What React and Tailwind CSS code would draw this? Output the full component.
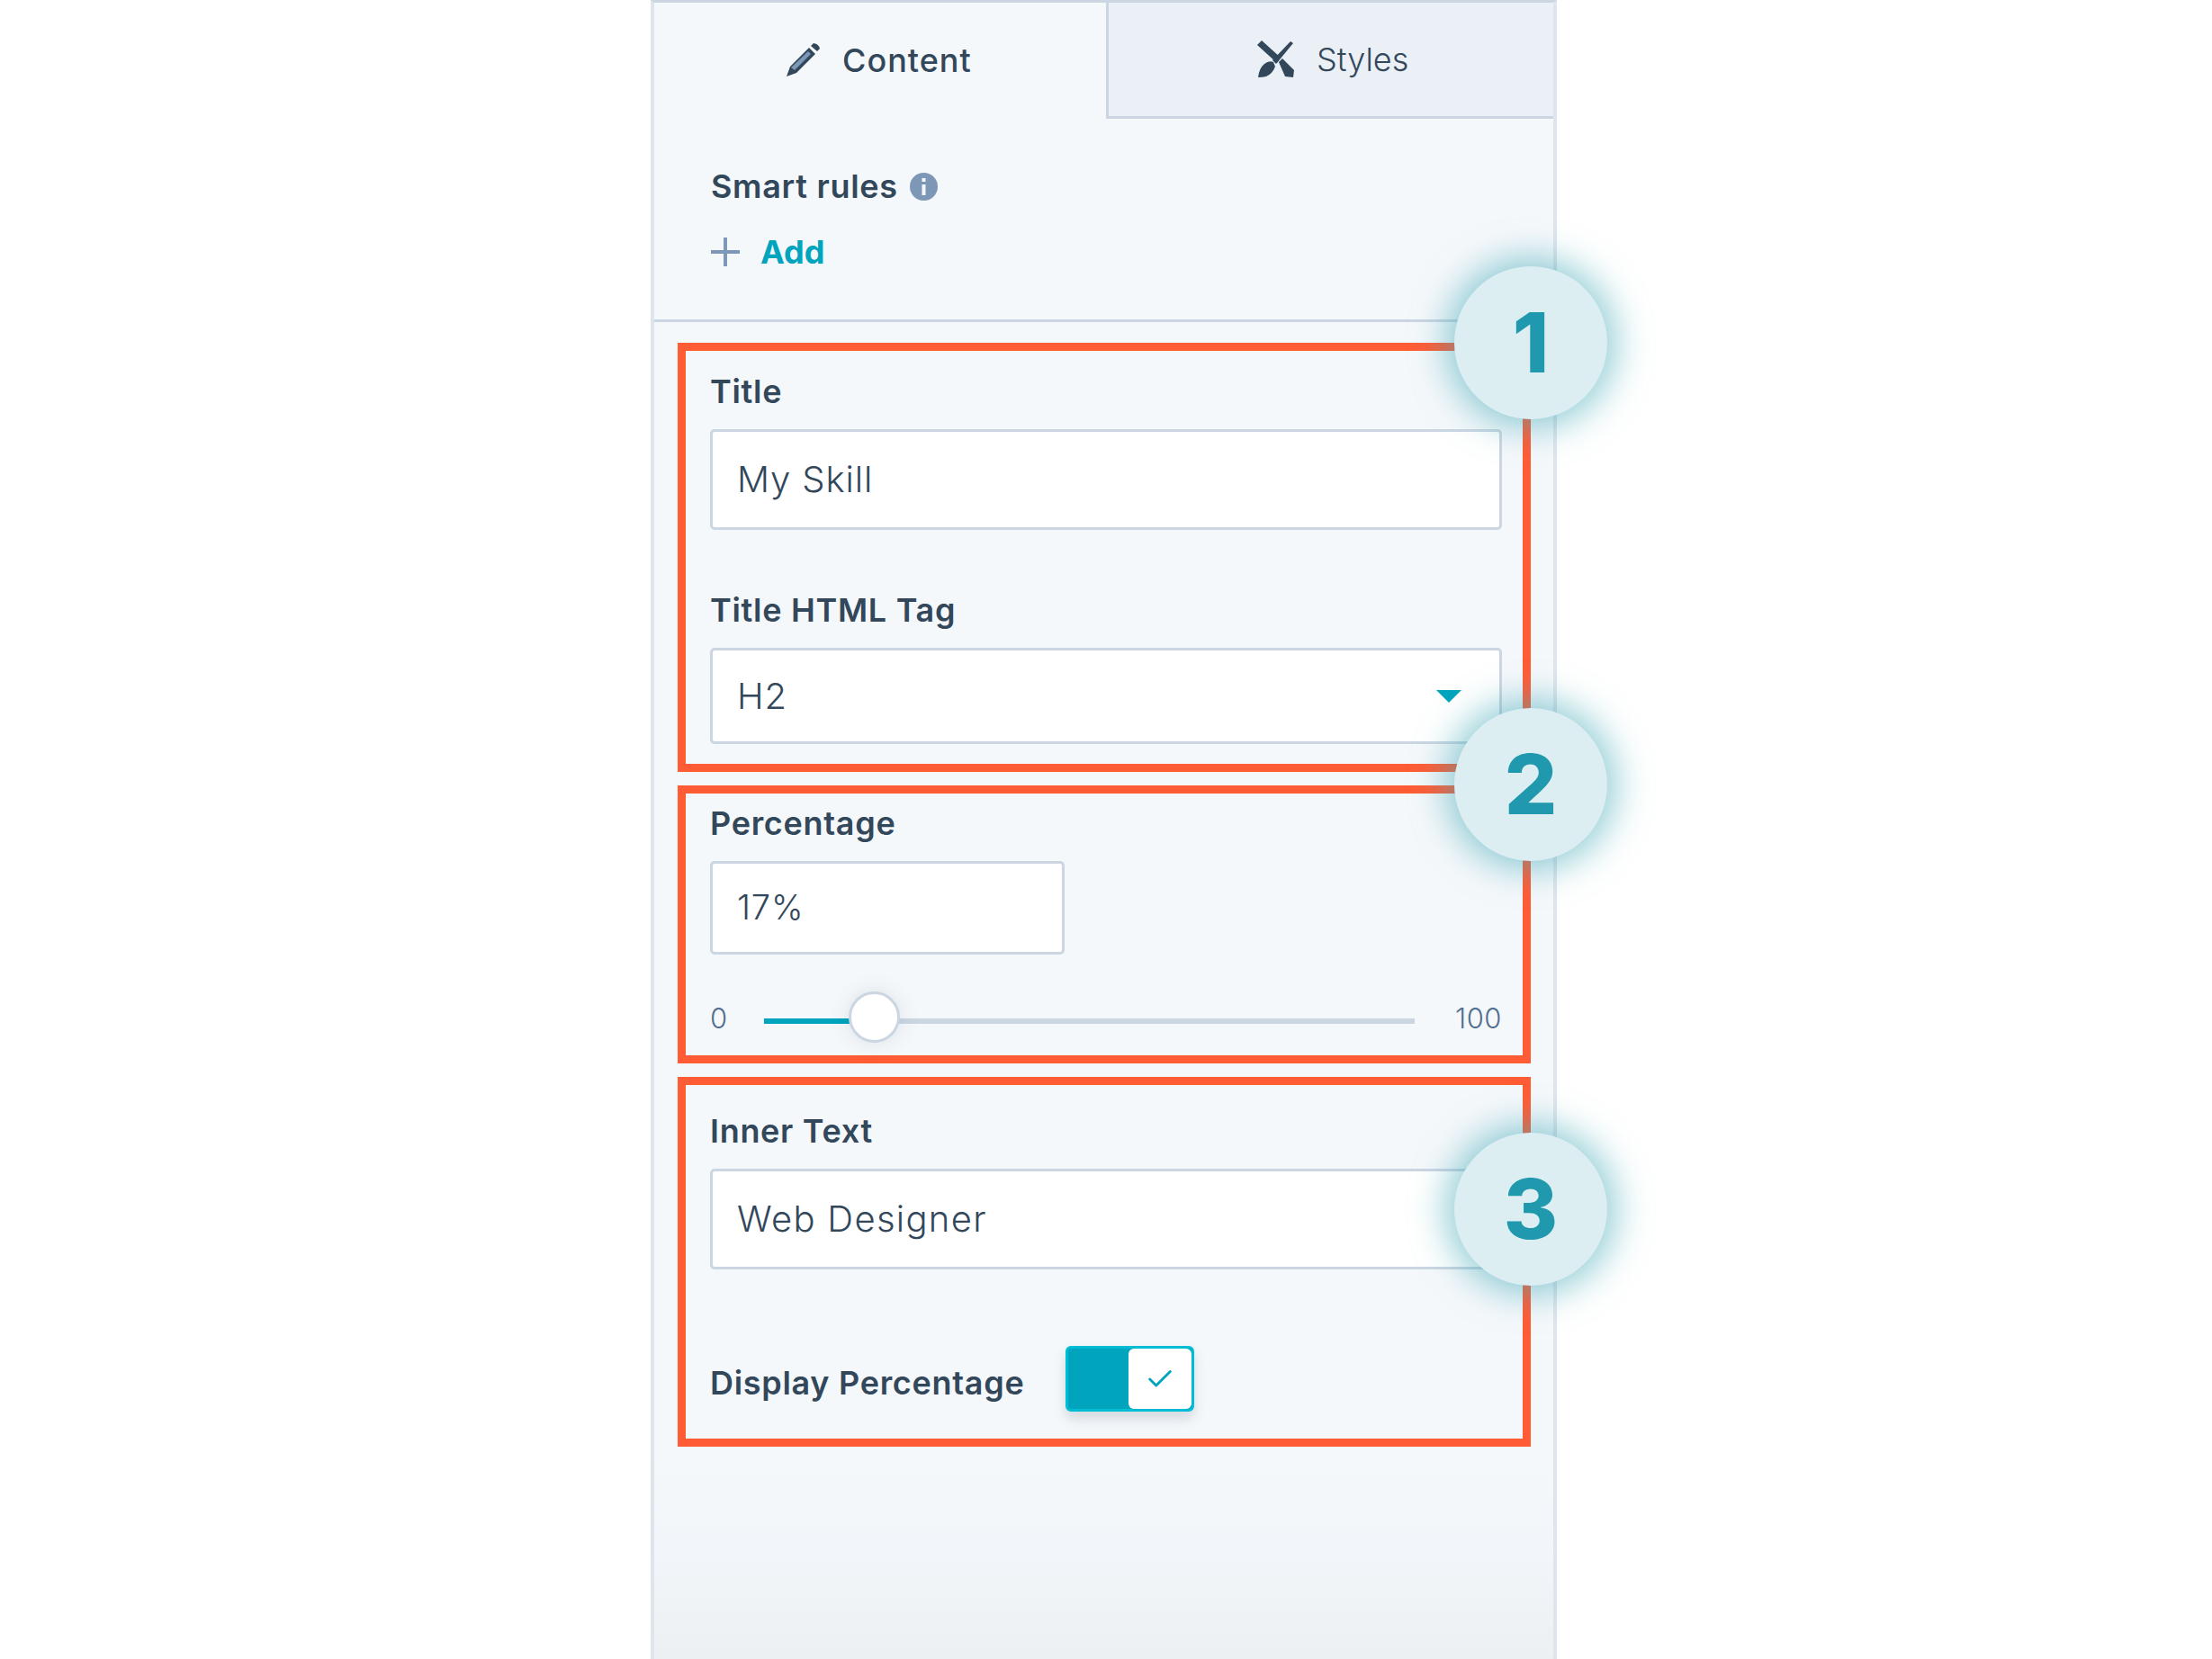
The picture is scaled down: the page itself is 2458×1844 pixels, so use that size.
import { Check } from 'lucide-react';

const Label = ({ children, className = '' }) => (
  <div className={`h-10 text-[36px] leading-10 font-semibold tracking-[0.7px] text-[#33475b] ${className}`}>{children}</div>
);

const TextInput = ({ value, className = '' }) => (
  <input
    readOnly
    value={value}
    className={`block rounded-[5px] border-[3px] border-[#cbd6e2] bg-white pb-[2px] pl-[27px] text-[40px] font-light tracking-[0.9px] text-[#33475b] outline-none ${className}`}
  />
);

const Badge = ({ n, className = '' }) => (
  <div
    className={`absolute left-[889px] z-10 flex h-[170px] w-[170px] items-center justify-center rounded-full bg-[#dceef2] text-[92px] leading-none font-extrabold text-[#2098ae] shadow-[0_0_38px_10px_rgba(60,165,180,0.55)] ${className}`}
  >
    {n}
  </div>
);

const Box = ({ children, className = '' }) => (
  <div className={`ml-[26px] w-[948px] border-[9px] border-[#ff5c35] pr-[23px] pl-[27px] ${className}`}>{children}</div>
);

const PencilIcon = () => (
  <svg width="38" height="38" viewBox="0 0 38 38" fill="#33475b">
    <path d="M1 37 L5 26 L26 5 L33 12 L12 33 Z" />
    <path d="M6 27 L25 9 L28 12 L10 30 Z" fill="#7c98b6" />
    <path d="M28 3 L31 0 Q37 1 38 6 L35 9 Z" />
  </svg>
);

const ToolsIcon = () => (
  <svg width="42" height="42" viewBox="0 0 42 42" fill="#33475b">
    <path d="M0 5 L5 0 L26 19 L22 25 Z" />
    <path d="M24 24 L28 20 L41 33 L40 41 L31 40 Z" />
    <path d="M37 1 L40 3 L21 26 L17 22 Z" />
    <path d="M1 41 Q2 31 8 26 Q13 22 18 24 L20 29 Q17 37 10 40 Q6 41 1 41 Z" />
  </svg>
);

const App = () => {
  return (
    <div className="h-[1844px] bg-white font-['Inter','Noto_Sans',sans-serif]">
      <div className="relative ml-[723px] flex h-full w-[1007px] flex-col border-x-[4px] border-t-[3px] border-x-[#dfe5ed] border-t-[#cbd6e2] bg-[#f5f8fb]">
        {/* Tabs */}
        <div className="flex h-[129px]">
          <div className="flex w-[502px] items-center pb-[2px] pl-[146px]">
            <PencilIcon />
            <span className="ml-[25px] text-[36px] font-medium tracking-[1px] text-[#33475b]">Content</span>
          </div>
          <div className="flex flex-1 items-center border-b-[3px] border-l-[3px] border-[#cbd6e2] bg-[#eaf0f6] pl-[165px]">
            <ToolsIcon />
            <span className="ml-[24px] text-[36px] font-light text-[#33475b]">Styles</span>
          </div>
        </div>

        {/* Smart rules */}
        <div className="h-[226px] border-b-[3px] border-[#cbd6e2] pt-[55px] pl-[63px]">
          <div className="flex h-10 items-center">
            <span className="text-[36px] font-semibold tracking-[0.7px] text-[#33475b]">Smart rules</span>
            <svg className="ml-[13px]" width="31" height="31" viewBox="0 0 31 31">
              <circle cx="15.5" cy="15.5" r="15.5" fill="#7c98b6" />
              <rect x="13.5" y="6" width="4" height="4" fill="#f5f8fb" />
              <rect x="13.5" y="13" width="4" height="12" fill="#f5f8fb" />
            </svg>
          </div>
          <div className="mt-[33px] flex h-10 items-center">
            <svg width="32" height="32" viewBox="0 0 32 32" fill="#7c98b6">
              <rect x="14" y="0" width="4" height="32" />
              <rect x="0" y="14" width="32" height="4" />
            </svg>
            <span className="ml-[23px] text-[36px] font-bold text-[#00a4bd]">Add</span>
          </div>
        </div>

        <Box className="mt-[23px] h-[477px]">
          <Label className="mt-[25px]">Title</Label>
          <TextInput value="My Skill" className="mt-[22px] h-[112px] w-[880px]" />
          <Label className="mt-[69px]">Title HTML Tag</Label>
          <div className="mt-[22px] flex h-[107px] w-[880px] items-center justify-between rounded-[5px] border-[3px] border-[#cbd6e2] bg-white pr-[42px] pl-[27px]">
            <span className="text-[40px] font-light tracking-[0.9px] text-[#33475b]">H2</span>
            <svg width="28" height="14" viewBox="0 0 28 14" fill="#00a4bd">
              <path d="M0 0 H28 L14 14 Z" />
            </svg>
          </div>
        </Box>

        <Box className="mt-[15px] h-[309px]">
          <Label className="mt-[13px]">Percentage</Label>
          <TextInput value="17%" className="mt-[22px] h-[104px] w-[394px] !text-[38px]" />
          <div className="mt-[41px] flex h-[57px] w-[880px] items-center justify-between text-[31px] font-light tracking-[0.5px] text-[#516f90]">
            <span className="pt-[4px]">0</span>
            <div className="relative h-[57px] w-[723px] translate-x-[-2px]">
              <div className="absolute top-[30px] left-0 h-[6px] w-full bg-[#cbd6e2]" />
              <div className="absolute top-[30px] left-0 h-[6px] w-[100px] bg-[#00a4bd]" />
              <div className="absolute top-0 left-[94px] h-[57px] w-[57px] rounded-full border-[3px] border-[#cbd6e2] bg-white shadow-[0_0_24px_rgba(45,62,80,0.12)]" />
            </div>
            <span className="pt-[4px]">100</span>
          </div>
        </Box>

        <Box className="mt-[15px] h-[411px]">
          <Label className="mt-[31px]">Inner Text</Label>
          <TextInput value="Web Designer" className="mt-[22px] h-[112px] w-[880px] !tracking-[1.3px]" />
          <div className="mt-[85px] flex items-start">
            <Label className="mt-[21px] w-[395px]">Display Percentage</Label>
            <div className="flex h-[73px] w-[143px] overflow-hidden rounded-[6px] border-[3px] border-[#00bcd4] bg-[#00a4bd] shadow-[0_8px_14px_rgba(45,62,80,0.16)]">
              <div className="ml-auto flex w-[70px] items-center justify-center rounded-[6px] bg-white">
                <Check size={34} strokeWidth={2} color="#00a4bd" />
              </div>
            </div>
          </div>
        </Box>

        <div className="flex-1 bg-linear-to-b from-[#f5f8fb] via-[#f2f5f9] via-50% to-[#ecf0f3]" />

        <Badge n="1" className="top-[293px]" />
        <Badge n="2" className="top-[784px]" />
        <Badge n="3" className="top-[1256px]" />
      </div>
    </div>
  );
};

export default App;
